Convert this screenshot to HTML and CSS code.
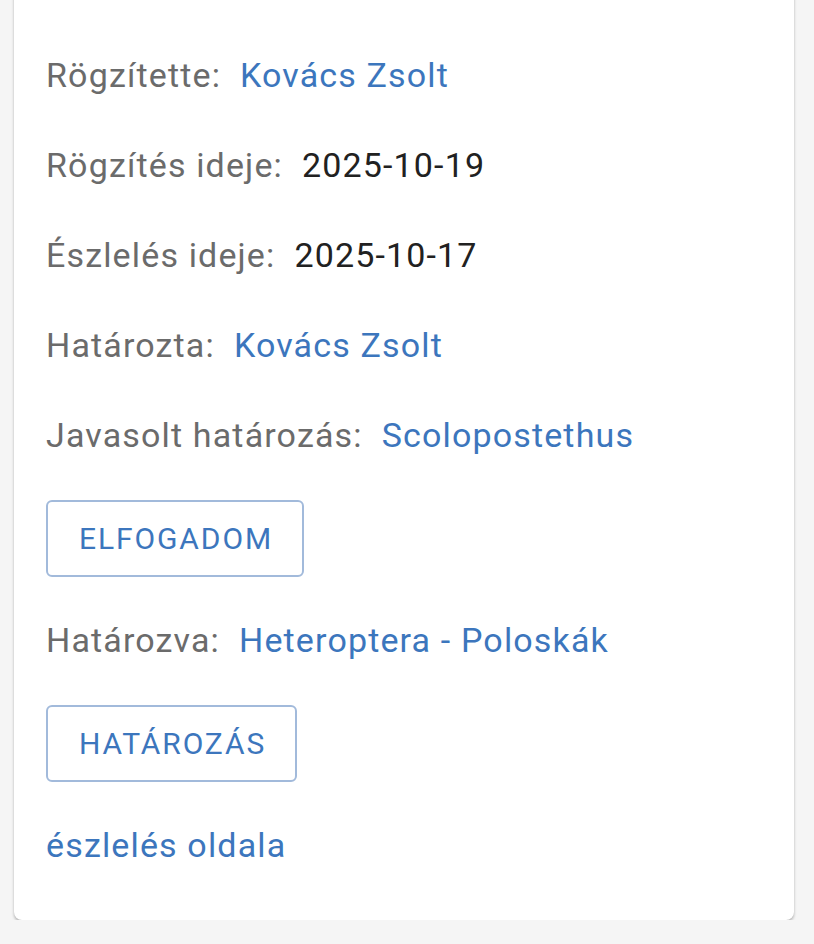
FILE: index.html
```html
<!DOCTYPE html>
<html lang="hu">
<head>
    <meta charset="UTF-8">
    <meta name="viewport" content="width=device-width, initial-scale=1.0">
    <title>Észlelés adatai</title>
    <link rel="stylesheet" href="styles.css">
</head>
<body>
    <div class="obs-card">
        <div class="obs-row">
            <span class="obs-label">Rögzítette:</span>
            <a class="obs-link" href="#">Kovács Zsolt</a>
        </div>
        <div class="obs-row">
            <span class="obs-label">Rögzítés ideje:</span>
            <span class="obs-value">2025-10-19</span>
        </div>
        <div class="obs-row">
            <span class="obs-label">Észlelés ideje:</span>
            <span class="obs-value">2025-10-17</span>
        </div>
        <div class="obs-row">
            <span class="obs-label">Határozta:</span>
            <a class="obs-link" href="#">Kovács Zsolt</a>
        </div>
        <div class="obs-row">
            <span class="obs-label">Javasolt határozás:</span>
            <a class="obs-link" href="#">Scolopostethus</a>
        </div>

        <button class="obs-btn">Elfogadom</button>

        <div class="obs-row">
            <span class="obs-label">Határozva:</span>
            <a class="obs-link" href="#">Heteroptera - Poloskák</a>
        </div>

        <button class="obs-btn">Határozás</button>

        <div class="obs-row">
            <a class="obs-link" href="#">észlelés oldala</a>
        </div>
    </div>
</body>
</html>
```

FILE: styles.css
```css
:root {
    --page: #f5f5f5;
    --label: #6b6b6b;
    --ink: #212121;
    --link: #3c76bd;
    --outline: #a2badb;
}

body {
    margin: 0;
    background: var(--page);
    font-family: Roboto, 'Noto Sans', sans-serif;
    padding: 0 20px 0 14px;
}

.obs-card {
    background: #fff;
    margin-top: -20px;
    padding: 50px 32px 30px;
    border-radius: 0 0 8px 8px;
    box-shadow: 0 2px 3px rgba(0, 0, 0, 0.28);
}

.obs-row {
    height: 90px;
    display: flex;
    align-items: center;
    gap: 19px;
    font-size: 34px;
    letter-spacing: 1.15px;
}

.obs-label {
    color: var(--label);
}

.obs-value {
    color: var(--ink);
}

.obs-link {
    color: var(--link);
    text-decoration: none;
}

.obs-btn {
    display: block;
    margin: 20px 0 18px;
    height: 77px;
    padding: 0 29px 0 31px;
    background: #fff;
    border: 2px solid var(--outline);
    border-radius: 6px;
    color: var(--link);
    font-family: Roboto, 'Noto Sans', sans-serif;
    font-size: 30px;
    letter-spacing: 1.9px;
    text-transform: uppercase;
}
```
